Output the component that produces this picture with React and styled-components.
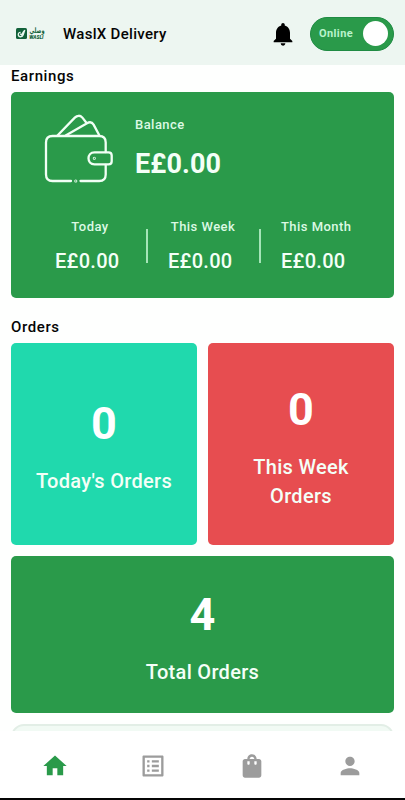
import styled, { createGlobalStyle } from "styled-components";
import {
    MdHome,
    MdListAlt,
    MdNotifications,
    MdPerson,
    MdShoppingBag,
} from "react-icons/md";

const GlobalStyle = createGlobalStyle`
    * {
        box-sizing: border-box;
    }

    body {
        margin: 0;
        background-color: #fefffe;
        color: #050505;
        font-family: Roboto, "Liberation Sans", sans-serif;
        font-weight: 500;
    }
`;

const Screen = styled.div`
    display: flex;
    flex-direction: column;
    height: 800px;
    overflow: hidden;
    border-bottom: 2px solid #050505;
`;

// Header
const Header = styled.header`
    display: flex;
    align-items: center;
    flex-shrink: 0;
    height: 65px;
    padding: 2px 11px 0 15px;
    background-color: #edf6f1;
`;

const Logo = styled.svg`
    display: block;
    width: 32px;
    height: 16px;
    margin-right: 16px;
    overflow: visible;
`;

const Title = styled.h1`
    flex: 1;
    margin: 0;
    font-size: 15px;
    font-weight: 500;
    line-height: 20px;
    letter-spacing: 0.3px;
`;

const Bell = styled(MdNotifications)`
    width: 28px;
    height: 28px;
    margin-right: 13px;
    color: #000;
`;

const Toggle = styled.button`
    display: flex;
    align-items: center;
    justify-content: space-between;
    width: 84px;
    height: 34px;
    padding: 0 5px 0 8px;
    border: 1px solid #1f8b43;
    border-radius: 17px;
    background-color: #2a9a4a;
    color: #b9f3cb;
    font-family: Roboto, "Liberation Sans", sans-serif;
    font-size: 11px;
    font-weight: 700;
    letter-spacing: 0.4px;
`;

const Knob = styled.span`
    width: 25px;
    height: 25px;
    border-radius: 50%;
    background-color: #fff;
`;

// Content
const Content = styled.main`
    flex: 1;
    min-height: 0;
    padding: 1px 11px 0;
    overflow: hidden;
`;

const SectionTitle = styled.h2`
    margin: 0;
    padding-top: ${({ $top }) => $top};
    font-size: 15px;
    font-weight: 500;
    line-height: 20px;
    letter-spacing: 0.6px;
`;

const Card = styled.section`
    border-radius: 5px;
    background-color: ${({ $color }) => $color || "#2a9a4a"};
    color: #f4fff7;
`;

const EarningsCard = styled(Card)`
    height: 206px;
    margin-top: 6px;
    padding-top: 22px;
`;

const BalanceRow = styled.div`
    display: flex;
    gap: 22px;
    height: 99px;
    padding-left: 33px;
`;

const BalanceInfo = styled.div`
    padding-top: 1px;
`;

const Wallet = styled.svg`
    width: 69px;
    height: 70px;
    fill: none;
    stroke: #f1fff5;
    stroke-width: 2.3;
    stroke-linecap: round;
    stroke-linejoin: round;
`;

const Label = styled.div`
    color: #dcf9e4;
    font-size: 13px;
    font-weight: 500;
    line-height: 20px;
    letter-spacing: 0.45px;
`;

const Balance = styled.div`
    margin-top: 13px;
    font-size: 27px;
    font-weight: 700;
    line-height: 32px;
    letter-spacing: 0.1px;
`;

const Periods = styled.div`
    display: flex;
    padding-left: 22px;
`;

const Period = styled.div`
    width: 113px;
    padding: 4px 0 0 22px;

    /* Divider between the periods */
    & + & {
        background: linear-gradient(#a5e5b8, #a5e5b8) 0 16px / 2px 34px
            no-repeat;
    }
`;

const PeriodLabel = styled(Label)`
    width: 70px;
    text-align: center;
    white-space: nowrap;
`;

const Amount = styled.div`
    margin-top: 12px;
    font-size: 20px;
    line-height: 24px;
    letter-spacing: 0.3px;
`;

const OrdersGrid = styled.div`
    display: grid;
    grid-template-columns: 1fr 1fr;
    grid-template-rows: 202px 157px 60px;
    gap: 11px;
    margin-top: 6px;
`;

const OrderCard = styled(Card)`
    display: flex;
    flex-direction: column;
    align-items: center;
    justify-content: center;
    grid-column: ${({ $wide }) => ($wide ? "1 / -1" : "auto")};
    padding-top: 3px;
    text-align: center;
`;

const Count = styled.strong`
    color: #fff;
    font-size: 45px;
    font-weight: 700;
    line-height: 58px;
`;

const OrderLabel = styled.span`
    width: 150px;
    margin-top: 14px;
    font-size: 20px;
    line-height: 29px;
    letter-spacing: 0.3px;
`;

const NextCard = styled.section`
    grid-column: 1 / -1;
    border: 2px solid #e2eee6;
    border-radius: 13px;
    background-color: #f1faf4;
`;

// Bottom navigation
const Nav = styled.nav`
    display: grid;
    grid-template-columns: repeat(4, 98.5px);
    justify-content: center;
    flex-shrink: 0;
    height: 67px;
    background-color: #fff;
`;

const NavItem = styled.button`
    display: flex;
    align-items: center;
    justify-content: center;
    padding: 2px 0 0;
    border: none;
    background-color: transparent;
    color: ${({ $active }) => ($active ? "#2a9a4a" : "#9c9c9c")};

    svg {
        width: 28px;
        height: 28px;
    }
`;

const periods = ["Today", "This Week", "This Month"];

const LogoMark = () => (
    <Logo viewBox="0 0 32 16">
        <rect x="1" y="2" width="11" height="11" rx="1.5" fill="#12613a" />
        <path
            d="M9.8 4 8.2 8.9C7.6 11.3 3.5 11.5 3.3 8.7 3.2 7.1 4.3 6.2 5.6 6.3M5.2 7.7l1.4 1.2L9 4.9"
            fill="none"
            stroke="#e9f8ef"
            strokeWidth="1.3"
        />
        <text
            x="29.5"
            y="6.6"
            direction="rtl"
            fill="#12613a"
            fontFamily="DejaVu Sans"
            fontSize="7.5"
            fontWeight="700"
            textLength="15"
            lengthAdjust="spacingAndGlyphs"
        >
            وصلي
        </text>
        <text
            x="14.3"
            y="12.9"
            fill="#12613a"
            fontSize="5.8"
            fontStyle="italic"
            fontWeight="900"
            textLength="14.2"
            lengthAdjust="spacingAndGlyphs"
        >
            WASLI
        </text>
    </Logo>
);

const WalletIcon = () => (
    <Wallet viewBox="0 0 69 70">
        {/* Notes */}
        <path d="M13.5 21.5 30.8 3.6c2.4-2.4 5.4-2.4 7.4-.2L42 8.2M21.7 21.5 43 9.2c2.6-1.4 5.2-.9 6.6 1.4l5.8 10.9" />
        {/* Purse */}
        <path d="M27 67H8.5C4.5 67 2 64.5 2 60.5V28.5c0-4 2.5-6.5 6.5-6.5h46.7c4 0 6.5 2.5 6.5 6.5V38M36.5 67h18.7c4 0 6.5-2.5 6.5-6.5V51" />
        <path d="M50.5 38.3h14c2.1 0 3.2 1.1 3.2 3.2v5.7c0 2.1-1.1 3.2-3.2 3.2h-14c-8 0-8-12.1 0-12.1Z" />
        <circle cx="50.3" cy="44.3" r=".4" />
        <circle cx="31.8" cy="67" r=".4" />
    </Wallet>
);

const App = () => {
    return (
        <Screen>
            <GlobalStyle />
            <Header>
                <LogoMark />
                <Title>WaslX Delivery</Title>
                <Bell />
                <Toggle>
                    Online
                    <Knob />
                </Toggle>
            </Header>

            <Content>
                <SectionTitle $top="0">Earnings</SectionTitle>
                <EarningsCard>
                    <BalanceRow>
                        <WalletIcon />
                        <BalanceInfo>
                            <Label>Balance</Label>
                            <Balance>E£0.00</Balance>
                        </BalanceInfo>
                    </BalanceRow>
                    <Periods>
                        {periods.map((period) => (
                            <Period key={period}>
                                <PeriodLabel>{period}</PeriodLabel>
                                <Amount>E£0.00</Amount>
                            </Period>
                        ))}
                    </Periods>
                </EarningsCard>

                <SectionTitle $top="19px">Orders</SectionTitle>
                <OrdersGrid>
                    <OrderCard $color="#20d9ad">
                        <Count>0</Count>
                        <OrderLabel>Today's Orders</OrderLabel>
                    </OrderCard>
                    <OrderCard $color="#e74d50">
                        <Count>0</Count>
                        <OrderLabel>This Week Orders</OrderLabel>
                    </OrderCard>
                    <OrderCard $wide>
                        <Count>4</Count>
                        <OrderLabel>Total Orders</OrderLabel>
                    </OrderCard>
                    <NextCard />
                </OrdersGrid>
            </Content>

            <Nav>
                <NavItem $active>
                    <MdHome />
                </NavItem>
                <NavItem>
                    <MdListAlt />
                </NavItem>
                <NavItem>
                    <MdShoppingBag />
                </NavItem>
                <NavItem>
                    <MdPerson />
                </NavItem>
            </Nav>
        </Screen>
    );
};

export default App;
